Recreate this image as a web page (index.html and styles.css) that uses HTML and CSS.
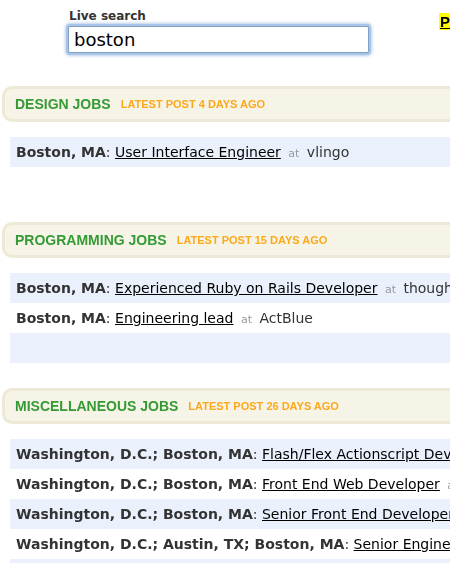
FILE: index.html
```html
<!DOCTYPE html>
<html lang="en">
<head>
    <meta charset="UTF-8">
    <title>Jobs - live search</title>
    <link rel="stylesheet" href="styles.css">
</head>
<body>
    <div id="top-bar">
        <div id="search-box">
            <label for="live-search">Live search</label>
            <input type="text" id="live-search" value="boston" autofocus>
        </div>
        <a href="#" class="post-link">Post a job</a>
    </div>

    <div id="sections">
        <div class="job-section">
            <h2 class="section-title">Design Jobs <span class="latest">Latest post 4 days ago</span></h2>
            <ul class="job-list">
                <li><b>Boston, MA</b>: <a href="#">User Interface Engineer</a> <span class="at">at</span> vlingo</li>
                <li></li>
            </ul>
        </div>

        <div class="job-section">
            <h2 class="section-title">Programming Jobs <span class="latest">Latest post 15 days ago</span></h2>
            <ul class="job-list">
                <li><b>Boston, MA</b>: <a href="#">Experienced Ruby on Rails Developer</a> <span class="at">at</span> thoughtbot</li>
                <li><b>Boston, MA</b>: <a href="#">Engineering lead</a> <span class="at">at</span> ActBlue</li>
                <li></li>
            </ul>
        </div>

        <div class="job-section">
            <h2 class="section-title">Miscellaneous Jobs <span class="latest">Latest post 26 days ago</span></h2>
            <ul class="job-list">
                <li><b>Washington, D.C.; Boston, MA</b>: <a href="#">Flash/Flex Actionscript Developer</a> <span class="at">at</span> Viget Labs</li>
                <li><b>Washington, D.C.; Boston, MA</b>: <a href="#">Front End Web Developer</a> <span class="at">at</span> Viget Labs</li>
                <li><b>Washington, D.C.; Boston, MA</b>: <a href="#">Senior Front End Developer</a> <span class="at">at</span> Viget Labs</li>
                <li><b>Washington, D.C.; Austin, TX; Boston, MA</b>: <a href="#">Senior Engineer</a> <span class="at">at</span> Viget Labs</li>
                <li></li>
            </ul>
        </div>
    </div>
</body>
</html>
```

FILE: styles.css
```css
body {
    margin: 0;
    font-family: "DejaVu Sans", Verdana, sans-serif;
    color: #333;
    background-color: #fff;
    overflow: hidden;
    white-space: nowrap;
}
#top-bar {
    display: flex;
    align-items: flex-start;
    padding: 8px 0 0 68px;
}
#search-box {
    flex: none;
    display: flex;
    flex-direction: column;
    width: 301px;
}
#search-box label {
    font-size: 12px;
    font-weight: bold;
    line-height: 16px;
    padding-left: 1px;
    color: #333;
}
#live-search {
    margin-top: 2px;
    height: 27px;
    box-sizing: border-box;
    padding: 0 5px;
    font-family: "DejaVu Sans", Verdana, sans-serif;
    font-size: 18px;
    color: #000;
    border: 1px solid #7f9fc4;
    border-radius: 2px;
    box-shadow: 0 0 0 2px #a8c4e6, 0 0 3px 3px rgba(120, 160, 210, 0.5);
    outline: none;
}
.post-link {
    flex: none;
    margin: 5px 0 0 70px;
    background-color: #ffff00;
    color: #000;
    font-family: "Liberation Sans", Arial, sans-serif;
    font-size: 15px;
    font-weight: bold;
    line-height: 17px;
    padding: 0 1px;
}
#sections {
    margin-top: 33px;
}
.job-section {
    margin-bottom: 25px;
}
.section-title {
    margin: 0 0 15px 2px;
    height: 36px;
    box-sizing: border-box;
    display: flex;
    align-items: center;
    padding-left: 10px;
    background-color: #f6f4e7;
    border: 3px solid #eee9d6;
    border-right: none;
    border-radius: 10px 0 0 10px;
    font-family: "Liberation Sans", Arial, sans-serif;
    font-size: 14px;
    font-weight: bold;
    text-transform: uppercase;
    color: #359a35;
}
.section-title .latest {
    margin-left: 10px;
    font-size: 11px;
    color: #fca81d;
}
.job-list {
    list-style: none;
    margin: 0 0 0 10px;
    padding: 0;
}
.job-list li {
    height: 30px;
    line-height: 30px;
    padding-left: 6px;
    font-size: 14px;
    color: #333;
}
.job-list li:nth-child(odd) {
    background-color: #eaf1fc;
}
.job-list b {
    color: #333;
}
.job-list a {
    color: #000;
}
.job-list .at {
    font-size: 11px;
    color: #999;
    margin: 0 3px;
}
```
